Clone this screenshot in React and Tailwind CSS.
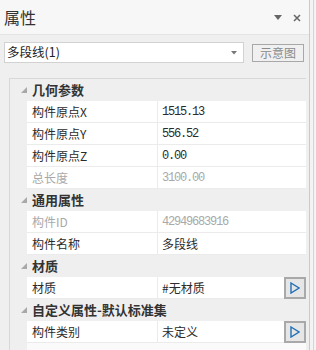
const cjk = { fontFamily: '"Noto Sans CJK SC", "Noto Sans", sans-serif' };
const mono = { fontFamily: '"Liberation Mono", "Noto Sans CJK SC", monospace' };

const rows = [
  { type: "cat", label: "几何参数" },
  { label: "构件原点X", value: "1515.13" },
  { label: "构件原点Y", value: "556.52" },
  { label: "构件原点Z", value: "0.00" },
  { label: "总长度", value: "3100.00", muted: true },
  { type: "cat", label: "通用属性" },
  { label: "构件ID", value: "42949683916", muted: true },
  { label: "构件名称", value: "多段线", cjkValue: true },
  { type: "cat", label: "材质" },
  { label: "材质", value: "#无材质", cjkValue: true, button: true },
  { type: "cat", label: "自定义属性-默认标准集" },
  { label: "构件类别", value: "未定义", cjkValue: true, button: true },
];

const Expander = () => (
  <svg width="6" height="6" viewBox="0 0 6 6" className="shrink-0">
    <polygon points="6,0 6,6 0,6" fill="#a8a8a8" />
  </svg>
);

const PlayButton = () => (
  <div className="h-[22px] w-[22px] shrink-0 border-2 border-[#a9a9a9] bg-[#e6e6e6] flex items-center justify-center">
    <svg width="10" height="12" viewBox="0 0 10 12">
      <polygon points="1,1 9,6 1,11" fill="none" stroke="#1f6fb8" strokeWidth="1.4" />
    </svg>
  </div>
);

const Row = ({ row }) => {
  if (row.type === "cat") {
    return (
      <div className="h-[22px] flex items-center bg-[#efefef] border-b border-[#efefef]">
        <div className="w-[22px] flex justify-end pr-[5px]">
          <Expander />
        </div>
        <span
          className="text-[13px] font-bold text-[#333] whitespace-nowrap"
          style={cjk}
        >
          {row.label}
        </span>
      </div>
    );
  }
  return (
    <div className="h-[22px] flex bg-[#efefef]">
      <div className="w-[17px] shrink-0" />
      <div className="w-[131px] shrink-0 bg-white border-b border-r border-[#ebebeb] flex items-center pl-[5px]">
        <span
          className={`text-[12px] whitespace-nowrap ${row.muted ? "text-[#a9a9a9]" : "text-[#2b2b2b]"}`}
          style={cjk}
        >
          {row.label}
        </span>
      </div>
      <div className="flex-1 bg-white border-b border-[#ebebeb] flex items-center pl-[4px]">
        <span
          className={`flex-1 whitespace-nowrap ${row.cjkValue ? "text-[12px]" : "text-[12px] tracking-[-1.2px]"} ${row.muted ? "text-[#a9a9a9]" : "text-[#2b2b2b]"}`}
          style={row.cjkValue ? cjk : mono}
        >
          {row.value}
        </span>
        {row.button && <PlayButton />}
      </div>
    </div>
  );
};

export default function App() {
  return (
    <div className="w-[316px] h-[350px] flex overflow-hidden bg-[#f0f0f0]" style={cjk}>
      <div className="w-[310px] shrink-0 flex flex-col border-r border-[#cacaca]">
        <div className="h-[35px] shrink-0 bg-[#f7f7f7] border-b border-[#e4e4e4] flex items-center pl-[4px] pr-[8px]">
          <span className="text-[16px] text-[#333] flex-1 leading-none" style={cjk}>
            属性
          </span>
          <svg width="8" height="6" viewBox="0 0 8 6" className="mr-[11px] mt-[2px]">
            <polygon points="0,0 8,0 4,5" fill="#666" />
          </svg>
          <svg width="8" height="8" viewBox="0 0 8 8" className="mt-[1px]">
            <path d="M1 1 L7 7 M7 1 L1 7" stroke="#666" strokeWidth="1.5" />
          </svg>
        </div>
        <div className="flex-1 bg-[#efefef] flex flex-col">
          <div className="flex items-center mt-[7px]">
            <div className="ml-[4px] w-[240px] h-[21px] bg-white border border-[#d2d2d2] flex items-center pl-[2px] pr-[6px]">
              <span className="flex-1 text-[12.5px] text-[#222] whitespace-nowrap" style={cjk}>
                多段线(1)
              </span>
              <svg width="6" height="4" viewBox="0 0 6 4">
                <polygon points="0,0 6,0 3,3.5" fill="#777" />
              </svg>
            </div>
            <div className="ml-[8px] w-[52px] h-[18px] border border-[#a8a8a8] bg-[#f0f0f0] flex items-center justify-center">
              <span className="text-[12px] text-[#8a8a8a] leading-none" style={cjk}>
                示意图
              </span>
            </div>
          </div>
          <div className="mt-[15px] ml-[9px] w-[297px] border-l border-t border-[#d8d8d8] flex flex-col">
            {rows.map((r, i) => (
              <Row key={i} row={r} />
            ))}
            <div className="h-[22px] flex bg-[#efefef]">
              <div className="w-[17px] shrink-0" />
              <div className="flex-1 bg-[#fafafa]" />
            </div>
          </div>
        </div>
      </div>
      <div className="flex-1 flex">
        <div className="w-[3px] bg-[#f3f3f3]" />
        <div className="w-[1px] bg-[#d4d4d4]" />
        <div className="flex-1 bg-[#f3f3f3]" />
      </div>
    </div>
  );
}
